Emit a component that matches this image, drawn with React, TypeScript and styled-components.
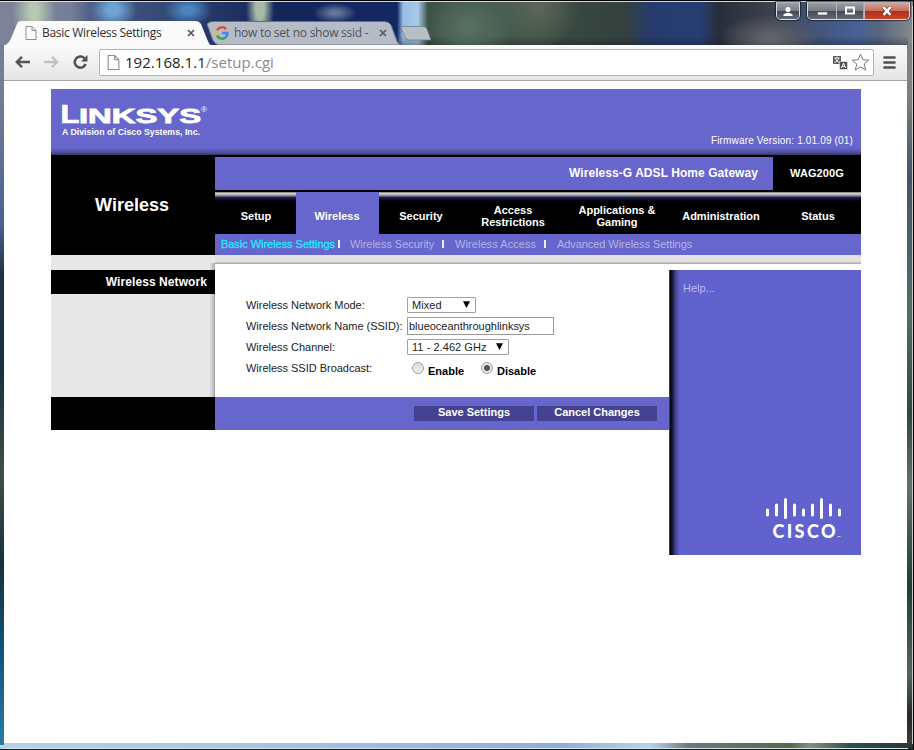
import React from 'react';
import styled, { createGlobalStyle } from 'styled-components';

const GlobalStyle = createGlobalStyle`
  * { box-sizing: border-box; }
  body { margin: 0; width: 914px; height: 750px; overflow: hidden; font-family: "Liberation Sans", Arial, sans-serif; }
`;

const Window = styled.div`
  position: relative;
  display: flex;
  flex-direction: column;
  width: 914px;
  height: 750px;
  padding: 0 7px 7px 4px;
  overflow: hidden;
  background:
    linear-gradient(#000, #000) 0 0 / 100% 1px no-repeat,
    linear-gradient(rgba(240,244,250,.85), rgba(240,244,250,.85)) 0 1px / 908px 1px no-repeat,
    linear-gradient(#10151c, #10151c) 0 749px / 100% 1px no-repeat,
    linear-gradient(#cfe8e8, #cfe8e8) 4px 748px / 904px 1px no-repeat,
    linear-gradient(#000, #000) 913px 0 / 1px 100% no-repeat,
    linear-gradient(#c5d0d0, #c5d0d0) 912px 6px / 1px 738px no-repeat,
    radial-gradient(ellipse 22px 36px at 34px 12px, #b6c8b0 20%, transparent 100%) 0 0 / 100% 45px no-repeat,
    radial-gradient(ellipse 24px 20px at 113px 10px, #6fa3d2 25%, transparent 100%) 0 0 / 100% 45px no-repeat,
    radial-gradient(ellipse 24px 16px at 188px 10px, #4b86c0 20%, transparent 100%) 0 0 / 100% 45px no-repeat,
    radial-gradient(ellipse 14px 38px at 260px 8px, #a8b9a5 30%, transparent 100%) 0 0 / 100% 45px no-repeat,
    radial-gradient(ellipse 22px 10px at 335px 13px, #64749d 20%, transparent 100%) 0 0 / 100% 45px no-repeat,
    radial-gradient(ellipse 44px 38px at 468px 27px, #566f60 10%, transparent 100%) 0 0 / 100% 45px no-repeat,
    radial-gradient(ellipse 42px 40px at 538px 8px, #5a6658 5%, transparent 100%) 0 0 / 100% 45px no-repeat,
    radial-gradient(ellipse 50px 24px at 770px 38px, #626369 10%, transparent 100%) 0 0 / 100% 45px no-repeat,
    linear-gradient(transparent 36px, rgba(15,22,32,.35) 45px) 400px 0 / 508px 45px no-repeat,
    linear-gradient(90deg, #7c8299 0, #777f98 70px, #485682 95px, #334874 170px, #233667 215px, #13265a 285px, #132762 397px, #99bde6 403px, #a9c8eb 418px, #3c5144 428px, #465b4f 500px, #38483f 570px, #35413f 625px, #263b6c 650px, #273e75 700px, #282e3c 718px, #39404a 766px, #425477 815px, #466096 855px, #59667d 880px, #888b8d 914px) 0 0 / 100% 45px no-repeat,
    linear-gradient(#757e98 45px, #4b6190 180px, #203144 230px, #163040 320px, #415047 430px, #17313e 520px, #10567f 610px, #287da8 700px, #a4c7e8 735px) 0 45px / 4px 700px no-repeat,
    linear-gradient(#80827f 45px, #465566 130px, #536d68 270px, #30473f 370px, #63716b 440px, #1d3d37 540px, #55655a 630px, #26282a 670px, #405046 720px) 907px 45px / 7px 700px no-repeat,
    linear-gradient(90deg, #b7cfea 0, #a2c2e6 300px, #8eafd9 560px, #b8d1eb 650px, #6e7977 690px, #5b664f 790px, #7e927f 810px, #344e49 850px, #233931 914px) 0 743px / 100% 7px no-repeat;
`;

const TitleBar = styled.header`
  display: flex;
  flex: none;
  height: 45px;
  padding-top: 21px;
`;

const Tab = styled.div<{ $active?: boolean }>`
  position: relative;
  z-index: ${p => (p.$active ? 2 : 1)};
  display: flex;
  align-items: center;
  flex: none;
  width: ${p => (p.$active ? 207 : 198)}px;
  margin-left: ${p => (p.$active ? 0 : -6)}px;
  height: 24px;
  padding: 0 0 0 ${p => (p.$active ? 21 : 10)}px;
  color: ${p => (p.$active ? '#303036' : '#50545c')};
  font: 12px "Open Sans", sans-serif;
`;

const TabShape = styled.svg`
  position: absolute;
  left: 0;
  top: 0;
  z-index: -1;
`;

const TabLabel = styled.span<{ $w: number; $ls: number }>`
  width: ${p => p.$w}px;
  margin-left: 5px;
  padding-bottom: 1px;
  white-space: nowrap;
  letter-spacing: ${p => p.$ls}px;
`;

const NewTab = styled.svg`
  margin: 5px 0 0 -2px;
`;

const Caption = styled.div`
  position: absolute;
  top: 2px;
  left: 776px;
  display: flex;
  gap: 7px;
`;

const CaptionGroup = styled.div`
  display: flex;
  height: 18px;
  border: 1px solid #d7dde5;
  border-top-color: #aeb5bd;
  border-radius: 0 0 5px 5px;
  box-shadow: 0 0 1px 1px rgba(10, 16, 28, .65);
  overflow: hidden;
`;

const CaptionButton = styled.button<{ $w: number; $close?: boolean }>`
  display: flex;
  align-items: center;
  justify-content: center;
  width: ${p => p.$w}px;
  height: 16px;
  padding: 0;
  border: 0;
  border-left: ${p => (p.$close ? '1px solid #c99' : '0')};
  background: ${p => (p.$close
    ? 'linear-gradient(#d9a397, #c5705e 48%, #b42f1b 52%, #c9442c)'
    : 'linear-gradient(#9b9fa5, #777c84 48%, #454b55 52%, #626a75)')};
  & + & { box-shadow: inset 1px 0 #b4b9c1; }
`;

const Toolbar = styled.div`
  display: flex;
  align-items: center;
  flex: none;
  height: 36px;
  padding: 0 9px 1px 10px;
  border-bottom: 1px solid #a5a5a9;
  background: linear-gradient(#fbfbfb, #e5e5e6);
  border-radius: 0 3px 0 0;
`;

const ToolGroup = styled.div`
  display: flex;
  align-items: center;
  gap: 12px;
`;

const Omnibox = styled.div`
  display: flex;
  align-items: center;
  width: 775px;
  height: 27px;
  margin: 0 9px 0 10px;
  padding: 0 3px 0 7px;
  border: 1px solid #b3b3b5;
  border-radius: 2px;
  background: #fff;
`;

const Url = styled.span`
  flex: 1;
  margin-left: 5px;
  color: #8a8a8a;
  font: 15px "Open Sans", sans-serif;
  letter-spacing: .03px;
  b { font-weight: 400; color: #222; }
`;

const PageActions = styled.div`
  display: flex;
  align-items: center;
  gap: 3px;
`;

const Viewport = styled.main`
  flex: 1;
  padding: 8px 0 0 47px;
  background: #fff;
`;

const Router = styled.div`
  width: 810px;
`;

const Banner = styled.div`
  display: flex;
  justify-content: space-between;
  align-items: flex-end;
  height: 66px;
  padding: 0 8px 8px 9px;
  background: linear-gradient(#6666cc 0, #6666cc 58px, #5d5dba 61px, #4b4b91 64px, #33335f 66px);
`;

const Logo = styled.svg`
  margin-bottom: 7px;
  overflow: visible;
  fill: #fff;
  font-family: "Liberation Sans", Arial, sans-serif;
  font-weight: bold;
`;

const Firmware = styled.span`
  color: #fff;
  font-size: 10px;
  line-height: 12px;
  letter-spacing: .16px;
`;

const Masthead = styled.div`
  display: flex;
  height: 100px;
  background: #000;
`;

const SectionTitle = styled.h1`
  display: flex;
  align-items: center;
  justify-content: center;
  width: 164px;
  margin: 0;
  padding-right: 2px;
  color: #fff;
  font-size: 18px;
`;

const NavColumn = styled.div`
  width: 646px;
  padding-top: 2px;
`;

const ProductRow = styled.div`
  display: flex;
  height: 33px;
  color: #fff;
  font-weight: bold;
  line-height: 32px;
`;

const ProductName = styled.div`
  width: 558px;
  padding-right: 15px;
  background: #6666cc;
  text-align: right;
  font-size: 12px;
  letter-spacing: .06px;
`;

const ModelName = styled.div`
  width: 88px;
  text-align: center;
  font-size: 11px;
  letter-spacing: .1px;
`;

const NavTabs = styled.nav`
  display: flex;
  height: 42px;
  margin-top: 2px;
`;

const NavTab = styled.a<{ $w: number; $active?: boolean; $shift?: number }>`
  display: flex;
  align-items: center;
  justify-content: center;
  width: ${p => p.$w}px;
  padding: 6px ${p => Math.max(0, -(p.$shift ?? 0))}px 0 ${p => Math.max(0, p.$shift ?? 0)}px;
  text-align: center;
  color: #fff;
  font-size: 11px;
  font-weight: bold;
  line-height: 12px;
  white-space: pre-line;
  background: ${p => (p.$active
    ? '#6666cc'
    : 'linear-gradient(#555 0, #d0d0cc 1px, #d0d0cc 2px, #9a9aa8 3px, #85859a 4px, #242450 5px, #050518 8px, #000 11px)')};
`;

const SubNav = styled.div`
  display: flex;
  align-items: center;
  height: 21px;
  padding: 0 0 1px 6px;
  background: #6666cc;
  font-size: 11px;
  line-height: 12px;
  color: #b5b5ea;
  white-space: nowrap;
`;

const SubLink = styled.a<{ $w: number; $ls: number; $active?: boolean }>`
  width: ${p => p.$w}px;
  letter-spacing: ${p => p.$ls}px;
  color: ${p => (p.$active ? '#22e8ff' : '#b3b3e6')};
  -webkit-text-stroke: ${p => (p.$active ? '.3px #22e8ff' : '0')};
`;

const Divider = styled.i<{ $gap: number }>`
  width: 2px;
  height: 8px;
  margin-right: ${p => p.$gap}px;
  background: #eeeefa;
`;

const Body = styled.div`
  display: flex;
  align-items: flex-start;
`;

const SideColumn = styled.div`
  width: 164px;
`;

const SideShade = styled.div<{ $h: number }>`
  height: ${p => p.$h}px;
  background: linear-gradient(90deg, #e7e7e7 0, #e7e7e7 158px, #c7c7c7 162px, #999 164px);
`;

const SideGap = styled.div`
  height: 15px;
  background:
    linear-gradient(90deg, #e0e0e0, #a8a8a8) 159px 8px / 5px 7px no-repeat,
    #e7e7e7;
`;

const SideHeading = styled.h2`
  height: 24px;
  margin: 0;
  padding-right: 8px;
  background: #000;
  color: #fff;
  font-size: 12px;
  line-height: 24px;
  text-align: right;
  letter-spacing: .08px;
`;

const SideFoot = styled.div`
  height: 33px;
  background: #000;
`;

const MainColumn = styled.div`
  width: 646px;
`;

const TopStrip = styled.div`
  height: 9px;
  background: linear-gradient(#e0e0f2 0, #e4e4e4 2px, #e2e2e2 7px, #a8a8a0 8px, #b8b8b4 9px);
`;

const Split = styled.div`
  display: flex;
  align-items: flex-start;
`;

const FormArea = styled.div`
  width: 454px;
`;

const Fields = styled.div`
  display: flex;
  flex-direction: column;
  height: 133px;
  padding: 30px 0 0 31px;
  background: #fff;
`;

const Field = styled.div`
  display: flex;
  align-items: center;
  height: 21px;
  color: #222;
  font-size: 11px;
`;

const FieldLabel = styled.label`
  width: 161px;
  white-space: nowrap;
  letter-spacing: -.02px;
`;

const SelectBox = styled.div<{ $w: number }>`
  display: flex;
  align-items: center;
  justify-content: space-between;
  width: ${p => p.$w}px;
  height: 16px;
  padding: 0 5px 0 4px;
  border: 1px solid #a0a0a0;
  border-radius: 1px;
  letter-spacing: .05px;
`;

const TextInput = styled.input`
  width: 147px;
  height: 18px;
  padding: 0 1px;
  border: 1px solid #999;
  outline: 0;
  color: #222;
  font: 11px "Liberation Sans", Arial, sans-serif;
  letter-spacing: -.01px;
`;

const Radio = styled.span<{ $checked?: boolean }>`
  width: 12px;
  height: 12px;
  margin: 0 4px 0 5px;
  border: 1px solid #a5a5a5;
  border-radius: 50%;
  background: ${p => (p.$checked
    ? 'radial-gradient(circle, #555 0 2.5px, #e4e4e4 3.5px)'
    : 'linear-gradient(#dcdcdc, #efefef)')};
`;

const RadioLabel = styled.b<{ $w: number }>`
  width: ${p => p.$w}px;
  padding-top: 6px;
  color: #000;
`;

const Actions = styled.div`
  display: flex;
  justify-content: flex-end;
  gap: 3px;
  height: 33px;
  padding: 9px 12px 0 0;
  background: #6666cc;
`;

const ActionButton = styled.button`
  width: 120px;
  height: 15px;
  padding: 0 0 2px;
  border: 0;
  background: #434391;
  color: #fff;
  font: bold 11px/13px "Liberation Sans", Arial, sans-serif;
`;

const HelpPanel = styled.aside`
  display: flex;
  flex-direction: column;
  justify-content: space-between;
  width: 192px;
  height: 285px;
  margin-top: 6px;
  padding: 12px 18px 13px 14px;
  background: linear-gradient(90deg, #777 0, #05050c 1px, #101025 3px, #30306a 5px, #5050a8 8px, #6262cf 11px);
  color: #b9b9ee;
  font-size: 11px;
`;

const CiscoMark = styled.svg`
  align-self: flex-end;
  overflow: visible;
  fill: #fff;
  font-family: Lato, "Open Sans", sans-serif;
  font-weight: 900;
`;

const PageIcon = ({ size = 14 }: { size?: number }) => (
  <svg width={size - 2} height={size} viewBox="0 0 12 14">
    <path d="M1 .5h6l4 4v9H1zM7 .5v4h4" fill="#fdfdfd" stroke="#8c8c91" />
  </svg>
);

const CloseIcon = ({ color }: { color: string }) => (
  <svg width="8" height="8" viewBox="0 0 8 8">
    <path d="M1 1l6 6M7 1L1 7" stroke={color} strokeWidth="1.7" />
  </svg>
);

const GoogleIcon = () => (
  <svg width="14" height="14" viewBox="0 0 14 14" fill="none" strokeWidth="2.5">
    <path d="M11.1 3.1A5.5 5.5 0 0 0 2 4.6" stroke="#e5453c" />
    <path d="M2 4.6a5.5 5.5 0 0 0 0 4.8" stroke="#f2b91d" />
    <path d="M2 9.4a5.5 5.5 0 0 0 8.8 1.7" stroke="#3aa757" />
    <path d="M10.8 11.1A5 5 0 0 0 12.4 7H7.2" stroke="#4285f4" />
  </svg>
);

const Arrow = ({ forward }: { forward?: boolean }) => (
  <svg width="17" height="14" viewBox="0 0 17 14" fill="none" stroke={forward ? '#c2c2c4' : '#525257'} strokeWidth="2.4">
    <path d={forward ? 'M1 7h13M9 1.8L14.2 7 9 12.2' : 'M16 7H3M8 1.8L2.8 7 8 12.2'} />
  </svg>
);

const ReloadIcon = () => (
  <svg width="17" height="16" viewBox="0 0 17 16">
    <path d="M12.4 4.2A5.6 5.6 0 1 0 13.6 10" fill="none" stroke="#505055" strokeWidth="2.5" />
    <path d="M15.5 1v6.5H9z" fill="#505055" />
  </svg>
);

const TranslateIcon = () => (
  <svg width="15" height="15" viewBox="0 0 15 15">
    <path d="M0 1h8v8H0z" fill="#5d5d61" />
    <path d="M1.5 3h5M4 1.8V3M2.3 3.2C3 5.3 4.5 6.8 6.5 7.5M5.7 3.2C5 5.4 3.5 6.9 1.5 7.5" stroke="#fff" strokeWidth=".9" fill="none" />
    <path d="M6.5 6.5h8v8h-8z" fill="#505054" stroke="#fff" strokeWidth=".5" />
    <path d="M8.4 13l2.1-5 2.1 5M9 11.4h3" stroke="#fff" fill="none" />
  </svg>
);

const StarIcon = () => (
  <svg width="19" height="19" viewBox="0 0 19 19">
    <path d="M9.5 1.2l2.3 5.5 6 .5-4.6 3.9 1.5 6-5.2-3.2-5.2 3.2 1.5-6L1.2 7.2l6-.5z" fill="#fff" stroke="#77777b" strokeLinejoin="round" />
  </svg>
);

const MenuIcon = () => (
  <svg width="13" height="13" viewBox="0 0 13 13">
    <path d="M1.5 1.5h10M1.5 6.5h10M1.5 11.5h10" stroke="#505054" strokeWidth="2.7" strokeLinecap="round" />
  </svg>
);

const LinksysLogo = () => (
  <Logo width="150" height="48" viewBox="0 -10 150 48">
    <text x="0.5" y="21" fontSize="26" textLength="19" lengthAdjust="spacingAndGlyphs" stroke="#fff" strokeWidth=".7">L</text>
    <text x="19" y="21" fontSize="19.5" textLength="122" lengthAdjust="spacingAndGlyphs" stroke="#fff" strokeWidth=".8">INKSYS</text>
    <text x="141" y="10" fontSize="8" fontWeight="normal">®</text>
    <text x="2" y="33" fontSize="9" textLength="138" lengthAdjust="spacingAndGlyphs">A Division of Cisco Systems, Inc.</text>
  </Logo>
);

const ciscoBars: [number, number, number][] = [
  [2.5, 12, 17], [11.5, 7, 17], [20.5, 1.5, 19.5], [29.5, 7, 17], [38.5, 12, 17],
  [47.5, 7, 17], [56.5, 1.5, 19.5], [65.5, 7, 17], [74.5, 12, 17],
];

const CiscoLogo = () => (
  <CiscoMark width="78" height="44" viewBox="0 0 78 44">
    {ciscoBars.map(([x, y1, y2]) => (
      <path key={x} d={`M${x} ${y1}V${y2}`} stroke="#fff" strokeWidth="3" strokeLinecap="round" />
    ))}
    <text x="7.5" y="39.5" fontSize="18" textLength="63" lengthAdjust="spacing">CISCO</text>
    <path d="M72.5 38.5h3" stroke="#c5c5f0" />
  </CiscoMark>
);

const Caret = () => (
  <svg width="7" height="7" viewBox="0 0 7 7"><path d="M0 .3h7L3.5 7z" fill="#000" /></svg>
);

const navItems = [
  { label: 'Setup', w: 81, shift: 1 },
  { label: 'Wireless', w: 83, active: true, shift: -1 },
  { label: 'Security', w: 84 },
  { label: 'Access\nRestrictions', w: 100 },
  { label: 'Applications &\nGaming', w: 108 },
  { label: 'Administration', w: 100 },
  { label: 'Status', w: 90, shift: 4 },
];

export default function App() {
  return (
    <>
      <GlobalStyle />
      <Window>
        <TitleBar>
          <Tab $active>
            <TabShape width="207" height="25" viewBox="0 0 207 25">
              <path d="M0 25C4 23 6 20 8 15L13 3Q14 0 17 0H191Q195 0 197 3L203 18Q205 23 207 25z" fill="#fafafa" />
            </TabShape>
            <PageIcon />
            <TabLabel $w={145} $ls={-0.31}>Basic Wireless Settings</TabLabel>
            <CloseIcon color="#55555a" />
          </Tab>
          <Tab>
            <TabShape width="198" height="24" viewBox="0 0 198 24">
              <path d="M2 3Q4 .5 8 .5H179Q184 .5 186 4L192 20Q193 23 196 24H14Q9 23 7 17z" fill="#b5bcc6" stroke="#69717e" />
            </TabShape>
            <GoogleIcon />
            <TabLabel $w={145} $ls={-0.25}>how to set no show ssid -</TabLabel>
            <CloseIcon color="#5b5d62" />
          </Tab>
          <NewTab width="30" height="15" viewBox="0 0 30 15">
            <path d="M2 .5H22Q25 .5 26 3L30 14H8Q5 14 4 11L0 2Q0 .5 2 .5z" fill="#b9c0c5" stroke="#69767d" strokeWidth=".7" />
          </NewTab>
        </TitleBar>
        <Caption>
          <CaptionGroup>
            <CaptionButton $w={22}>
              <svg width="10" height="9" viewBox="0 0 10 9"><circle cx="5" cy="2.5" r="2.5" fill="#fff" /><path d="M.5 9V7.5Q5 4 9.5 7.5V9z" fill="#fff" /></svg>
            </CaptionButton>
          </CaptionGroup>
          <CaptionGroup>
            <CaptionButton $w={28}>
              <svg width="11" height="10" viewBox="0 0 11 10"><path d="M.5 6h10v3H.5z" fill="#fff" stroke="#555b66" strokeWidth=".7" /></svg>
            </CaptionButton>
            <CaptionButton $w={27}>
              <svg width="12" height="10" viewBox="0 0 12 10"><path d="M2 1.5h8v6H2z" fill="none" stroke="#fff" strokeWidth="2" /></svg>
            </CaptionButton>
            <CaptionButton $w={46} $close>
              <svg width="12" height="10" viewBox="0 0 12 10"><path d="M2.5 1.2l7 7.6M9.5 1.2l-7 7.6" stroke="#6c3630" strokeWidth="4" /><path d="M2.5 1.2l7 7.6M9.5 1.2l-7 7.6" stroke="#fff" strokeWidth="2.6" /></svg>
            </CaptionButton>
          </CaptionGroup>
        </Caption>

        <Toolbar>
          <ToolGroup>
            <Arrow />
            <Arrow forward />
            <ReloadIcon />
          </ToolGroup>
          <Omnibox>
            <PageIcon size={15} />
            <Url><b>192.168.1.1</b>/setup.cgi</Url>
            <PageActions>
              <TranslateIcon />
              <StarIcon />
            </PageActions>
          </Omnibox>
          <MenuIcon />
        </Toolbar>

        <Viewport>
          <Router>
            <Banner>
              <LinksysLogo />
              <Firmware>Firmware Version: 1.01.09 (01)</Firmware>
            </Banner>
            <Masthead>
              <SectionTitle>Wireless</SectionTitle>
              <NavColumn>
                <ProductRow>
                  <ProductName>Wireless-G ADSL Home Gateway</ProductName>
                  <ModelName>WAG200G</ModelName>
                </ProductRow>
                <NavTabs>
                  {navItems.map(n => (
                    <NavTab key={n.label} $w={n.w} $active={n.active} $shift={n.shift}>{n.label}</NavTab>
                  ))}
                </NavTabs>
                <SubNav>
                  <SubLink $w={117} $ls={-0.04} $active>Basic Wireless Settings</SubLink>
                  <Divider $gap={10} />
                  <SubLink $w={92} $ls={-0.04}>Wireless Security</SubLink>
                  <Divider $gap={11} />
                  <SubLink $w={89} $ls={0.07}>Wireless Access</SubLink>
                  <Divider $gap={11} />
                  <SubLink $w={140} $ls={-0.07}>Advanced Wireless Settings</SubLink>
                </SubNav>
              </NavColumn>
            </Masthead>
            <Body>
              <SideColumn>
                <SideGap />
                <SideHeading>Wireless Network</SideHeading>
                <SideShade $h={103} />
                <SideFoot />
              </SideColumn>
              <MainColumn>
                <TopStrip />
                <Split>
                  <FormArea>
                    <Fields>
                      <Field>
                        <FieldLabel>Wireless Network Mode:</FieldLabel>
                        <SelectBox $w={69}>Mixed<Caret /></SelectBox>
                      </Field>
                      <Field>
                        <FieldLabel>Wireless Network Name (SSID):</FieldLabel>
                        <TextInput defaultValue="blueoceanthroughlinksys" />
                      </Field>
                      <Field>
                        <FieldLabel>Wireless Channel:</FieldLabel>
                        <SelectBox $w={102}>11 - 2.462 GHz<Caret /></SelectBox>
                      </Field>
                      <Field>
                        <FieldLabel>Wireless SSID Broadcast:</FieldLabel>
                        <Radio />
                        <RadioLabel $w={48}>Enable</RadioLabel>
                        <Radio $checked />
                        <RadioLabel $w={48}>Disable</RadioLabel>
                      </Field>
                    </Fields>
                    <Actions>
                      <ActionButton>Save Settings</ActionButton>
                      <ActionButton>Cancel Changes</ActionButton>
                    </Actions>
                  </FormArea>
                  <HelpPanel>
                    <span>Help...</span>
                    <CiscoLogo />
                  </HelpPanel>
                </Split>
              </MainColumn>
            </Body>
          </Router>
        </Viewport>
      </Window>
    </>
  );
}
